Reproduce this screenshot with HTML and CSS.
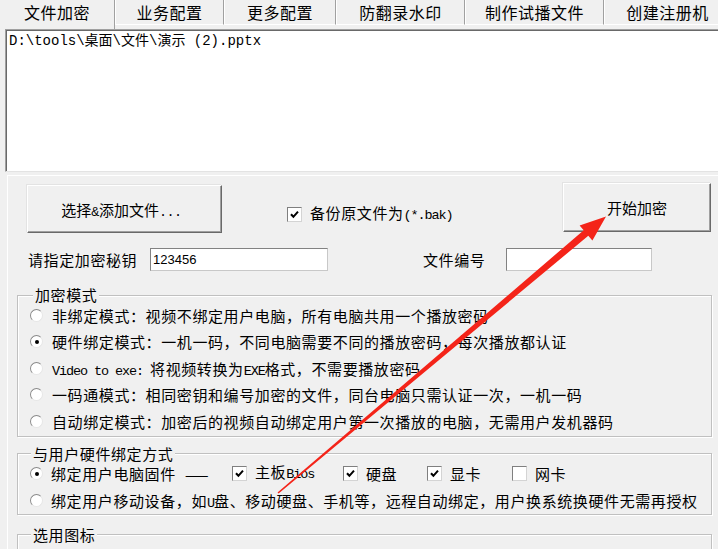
FILE: index.html
```html
<!DOCTYPE html>
<html>
<head lang="zh-CN">
    <meta charset="UTF-8">
    <title>文件加密</title>
    <link rel="stylesheet" href="styles.css">
</head>
<body>
<ul class="tabs">
    <li class="current">文件加密</li>
    <li>业务配置</li>
    <li>更多配置</li>
    <li>防翻录水印</li>
    <li>制作试播文件</li>
    <li>创建注册机</li>
</ul>

<div class="filelist">
    <p>D:\tools\桌面\文件\演示 (2).pptx</p>
</div>

<div class="panel">
    <div class="row-btns">
        <button class="btn btn-add">选择<span class="en">&amp;</span>添加文件<span class="en">...</span></button>
        <label class="check bak">
            <i class="box"><svg width="13" height="13" viewBox="0 0 13 13"><path d="M3 6.2 L5.4 8.8 L10 3.6" fill="none" stroke="#000" stroke-width="2"/></svg></i><span>备份原文件为<span class="en">(*.bak)</span></span>
        </label>
        <button class="btn btn-go">开始加密</button>
    </div>

    <div class="row-fields">
        <span class="lbl lbl-key">请指定加密秘钥</span>
        <span class="input key">123456</span>
        <span class="lbl lbl-no">文件编号</span>
        <span class="input num"></span>
    </div>

    <fieldset class="grp grp-mode">
        <legend>加密模式</legend>
        <div class="opt"><i class="radio"></i><span>非绑定模式：视频不绑定用户电脑，所有电脑共用一个播放密码</span></div>
        <div class="opt"><i class="radio on"></i><span>硬件绑定模式：一机一码，不同电脑需要不同的播放密码，每次播放都认证</span></div>
        <div class="opt"><i class="radio"></i><span><span class="en">Video to exe: </span>将视频转换为<span class="en">EXE</span>格式，不需要播放密码</span></div>
        <div class="opt"><i class="radio"></i><span>一码通模式：相同密钥和编号加密的文件，同台电脑只需认证一次，一机一码</span></div>
        <div class="opt"><i class="radio"></i><span>自动绑定模式：加密后的视频自动绑定用户第一次播放的电脑，无需用户发机器码</span></div>
    </fieldset>

    <fieldset class="grp grp-hw">
        <legend>与用户硬件绑定方式</legend>
        <div class="opt">
            <span class="hw-main"><i class="radio on"></i><span>绑定用户电脑固件</span></span>
            <span class="dash">——</span>
            <label class="check hw1"><i class="box"><svg width="13" height="13" viewBox="0 0 13 13"><path d="M3 6.2 L5.4 8.8 L10 3.6" fill="none" stroke="#000" stroke-width="2"/></svg></i><span>主板<span class="en">Bios</span></span></label>
            <label class="check hw2"><i class="box"><svg width="13" height="13" viewBox="0 0 13 13"><path d="M3 6.2 L5.4 8.8 L10 3.6" fill="none" stroke="#000" stroke-width="2"/></svg></i><span>硬盘</span></label>
            <label class="check hw3"><i class="box"><svg width="13" height="13" viewBox="0 0 13 13"><path d="M3 6.2 L5.4 8.8 L10 3.6" fill="none" stroke="#000" stroke-width="2"/></svg></i><span>显卡</span></label>
            <label class="check"><i class="box"></i><span>网卡</span></label>
        </div>
        <div class="opt"><i class="radio"></i><span>绑定用户移动设备，如<span class="en">U</span>盘、移动硬盘、手机等，远程自动绑定，用户换系统换硬件无需再授权</span></div>
    </fieldset>

    <fieldset class="grp grp-icon">
        <legend>选用图标</legend>
    </fieldset>
</div>

<svg class="arrow" width="718" height="549" viewBox="0 0 718 549">
    <polygon points="277.5,492.6 583.7,230.3 579.6,225.6 606,216.5 592.4,240.4 588.3,235.7 278.6,493.6" fill="#f42419"/>
</svg>
</body>
</html>
```

FILE: styles.css
```css
* {
    margin: 0;
    padding: 0;
    box-sizing: border-box;
}

ul {
    list-style: none;
}

body {
    width: 718px;
    height: 549px;
    overflow: hidden;
    position: relative;
    background-color: #f0f0f0;
    color: #000;
    font-family: "Noto Sans CJK SC", sans-serif;
    font-size: 15px;
    letter-spacing: 0.6px;
}

.en {
    font-family: "Liberation Mono", monospace;
    font-size: 13.5px;
    letter-spacing: -1.1px;
}

/* 顶部选项卡 */
.tabs {
    display: flex;
    height: 29px;
    white-space: nowrap;
}
.tabs li {
    flex: none;
    height: 25px;
    line-height: 25px;
    text-align: center;
    font-size: 16px;
    letter-spacing: 0.5px;
    border-left: 1px solid #fff;
    border-right: 1px solid #a0a0a0;
    border-bottom: 1px solid #fff;
}
.tabs li.current {
    height: 29px;
    border-left: 0;
    border-bottom: 0;
}
.tabs li:nth-child(1) { width: 115px; }
.tabs li:nth-child(2) { width: 109px; }
.tabs li:nth-child(3) { width: 112px; }
.tabs li:nth-child(4) { width: 129px; }
.tabs li:nth-child(5) { width: 139px; }
.tabs li:nth-child(6) { width: 127px; }

/* 文件列表 */
.filelist {
    margin-left: 5px;
    height: 143px;
    padding: 2px 0 0 3px;
    background-color: #fff;
    border-top: 1px solid #a0a0a0;
    border-left: 1px solid #a0a0a0;
    border-bottom: 1px solid #e3e3e3;
    box-shadow: inset 1px 1px 0 #696969;
}
.filelist p {
    font-family: "Liberation Mono", "Noto Sans CJK SC", monospace;
    font-size: 14px;
    letter-spacing: 0;
    line-height: 18px;
}

.panel {
    margin: 3px 0 0 7px;
    height: 380px;
    border-top: 1px solid #fff;
    border-left: 1px solid #fff;
}

/* 按钮行 */
.row-btns {
    display: flex;
    align-items: flex-start;
    margin-top: 7px;
}
.btn {
    background-color: #f0f0f0;
    border: 1px solid;
    border-color: #fff #696969 #696969 #fff;
    box-shadow: inset -1px -1px 0 #a0a0a0, -1px -1px 0 #e3e3e3;
    font-family: "Noto Sans CJK SC", sans-serif;
    font-size: 15px;
    letter-spacing: 0;
    color: #000;
}
.btn .en {
    letter-spacing: -0.5px;
}
.btn-add {
    width: 195px;
    height: 48px;
    margin: 2px 0 0 19px;
    padding-right: 6px;
}
.btn-go {
    width: 148px;
    height: 49px;
    margin: 0 7px 0 auto;
}

.check {
    display: flex;
    align-items: center;
    line-height: 18px;
    white-space: nowrap;
}
.box {
    width: 15px;
    height: 15px;
    margin-right: 8px;
    flex: none;
    background-color: #fff;
    border: 1px solid;
    border-color: #7f7f7f #d4d4d4 #d4d4d4 #7f7f7f;
    display: flex;
    align-items: center;
    justify-content: center;
}
.bak {
    margin: 21px 0 0 65px;
}

/* 秘钥、编号 */
.row-fields {
    display: flex;
    align-items: center;
    height: 23px;
    margin-top: 15px;
}
.lbl-key {
    width: 122px;
    margin-left: 20px;
}
.lbl-no {
    width: 83px;
    margin-left: 95px;
}
.input {
    height: 23px;
    background-color: #fff;
    border: 1px solid;
    border-color: #828282 #c8c8c8 #c8c8c8 #828282;
}
.key {
    width: 178px;
    padding-left: 2px;
    font-family: "Liberation Sans", sans-serif;
    font-size: 13px;
    letter-spacing: 0;
    line-height: 21px;
}
.num {
    width: 146px;
}

/* 分组框 */
.grp {
    width: 695px;
    margin-left: 9px;
    padding: 0 0 1px 12px;
    border: 1px solid #c0c0c0;
    box-shadow: 1px 1px 0 #fff, inset 1px 1px 0 #fff;
}
.grp legend {
    padding: 0 2px;
    line-height: 14px;
    background-color: #f0f0f0;
}
.grp-mode {
    margin-top: 17px;
}
.grp-mode legend {
    margin-left: 3px;
}
.grp-hw {
    margin-top: 10px;
    padding-bottom: 0;
}
.grp-hw legend {
    margin-left: 1px;
}
.grp-icon {
    margin-top: 13px;
    height: 80px;
}
.grp-icon legend {
    margin-left: 1px;
}

.opt {
    display: flex;
    align-items: center;
    height: 26.5px;
    white-space: nowrap;
}
.radio {
    width: 13px;
    height: 13px;
    margin-right: 9px;
    flex: none;
    border-radius: 50%;
    background-color: #fff;
    border: 1px solid;
    border-color: #8a8a8a #e6e6e6 #e6e6e6 #8a8a8a;
    display: flex;
    align-items: center;
    justify-content: center;
}
.radio.on::after {
    content: "";
    width: 4px;
    height: 4px;
    border-radius: 50%;
    background-color: #000;
}

.hw-main {
    display: flex;
    align-items: center;
    width: 155px;
}
.grp-hw .radio {
    margin-right: 8px;
}
.dash {
    width: 47px;
    font-size: 14px;
    letter-spacing: 0;
}
.hw1 { width: 111px; }
.hw2 { width: 84px; }
.hw3 { width: 85px; }

/* 红色箭头标注 */
.arrow {
    position: absolute;
    left: 0;
    top: 0;
    pointer-events: none;
}
```
